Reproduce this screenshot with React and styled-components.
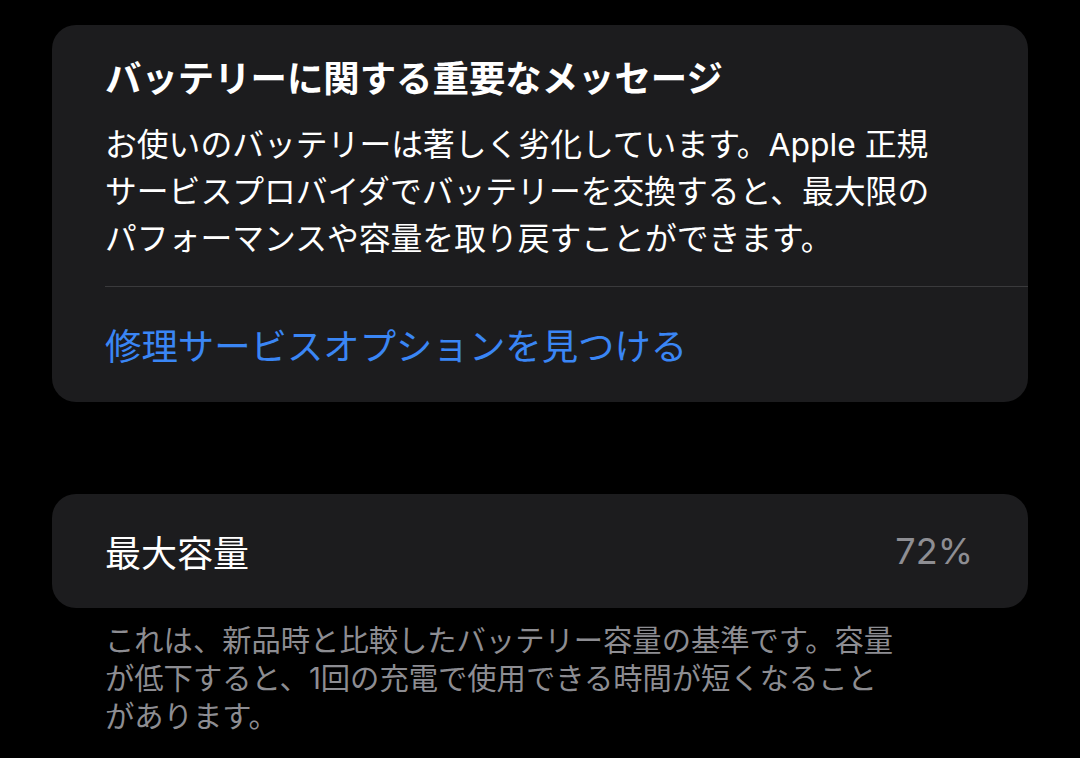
import React from "react";
import styled, { createGlobalStyle } from "styled-components";

const Global = createGlobalStyle`
  html, body { margin: 0; padding: 0; background: #000; }
  body {
    font-family: Inter, "Noto Sans CJK JP", "Noto Sans", sans-serif;
    -webkit-font-smoothing: antialiased;
  }
`;

const Page = styled.div`
  width: 1080px;
  min-height: 758px;
  box-sizing: border-box;
  padding: 25px 52px 0 52px;
  display: flex;
  flex-direction: column;
  background: #000;
`;

const Card = styled.section`
  background: #1c1c1e;
  border-radius: 24px;
  overflow: hidden;
  margin-bottom: ${(p) => p.$gap || 0}px;
`;

const MessageBody = styled.div`
  padding: 32px 0 24px 53px;
`;

const Title = styled.h2`
  margin: 0 0 20px 0;
  font-size: 36.4px;
  line-height: 44px;
  font-weight: 700;
  color: #ffffff;
`;

const Body = styled.p`
  margin: 0;
  font-size: 31.8px;
  line-height: 47px;
  font-weight: 400;
  color: #ffffff;
  white-space: nowrap;
`;

const Separator = styled.div`
  height: 1px;
  margin-left: 53px;
  background: #3a3a3c;
`;

const LinkRow = styled.a`
  height: 115px;
  display: flex;
  align-items: center;
  padding-left: 53px;
  font-size: 36.4px;
  color: #3a86f5;
  text-decoration: none;
  padding-bottom: 2px;
  box-sizing: border-box;
`;

const ValueRow = styled.div`
  height: 114px;
  display: flex;
  align-items: center;
  justify-content: space-between;
  padding: 0 55px 0 53px;
`;

const Label = styled.span`
  font-size: 36px;
  color: #ffffff;
`;

const Value = styled.span`
  font-size: 36px;
  color: #8e8e93;
`;

const Footnote = styled.p`
  margin: 14px 0 0 53px;
  font-size: 29.3px;
  line-height: 38px;
  color: #8d8d92;
  white-space: nowrap;
`;

export default function App() {
  return (
    <>
      <Global />
      <Page>
        <Card $gap={92}>
          <MessageBody>
            <Title>バッテリーに関する重要なメッセージ</Title>
            <Body>
              お使いのバッテリーは著しく劣化しています。Apple 正規
              <br />
              サービスプロバイダでバッテリーを交換すると、最大限の
              <br />
              パフォーマンスや容量を取り戻すことができます。
            </Body>
          </MessageBody>
          <Separator />
          <LinkRow href="#">修理サービスオプションを見つける</LinkRow>
        </Card>
        <Card>
          <ValueRow>
            <Label>最大容量</Label>
            <Value>72%</Value>
          </ValueRow>
        </Card>
        <Footnote>
          これは、新品時と比較したバッテリー容量の基準です。容量
          <br />
          が低下すると、1回の充電で使用できる時間が短くなること
          <br />
          があります。
        </Footnote>
      </Page>
    </>
  );
}
